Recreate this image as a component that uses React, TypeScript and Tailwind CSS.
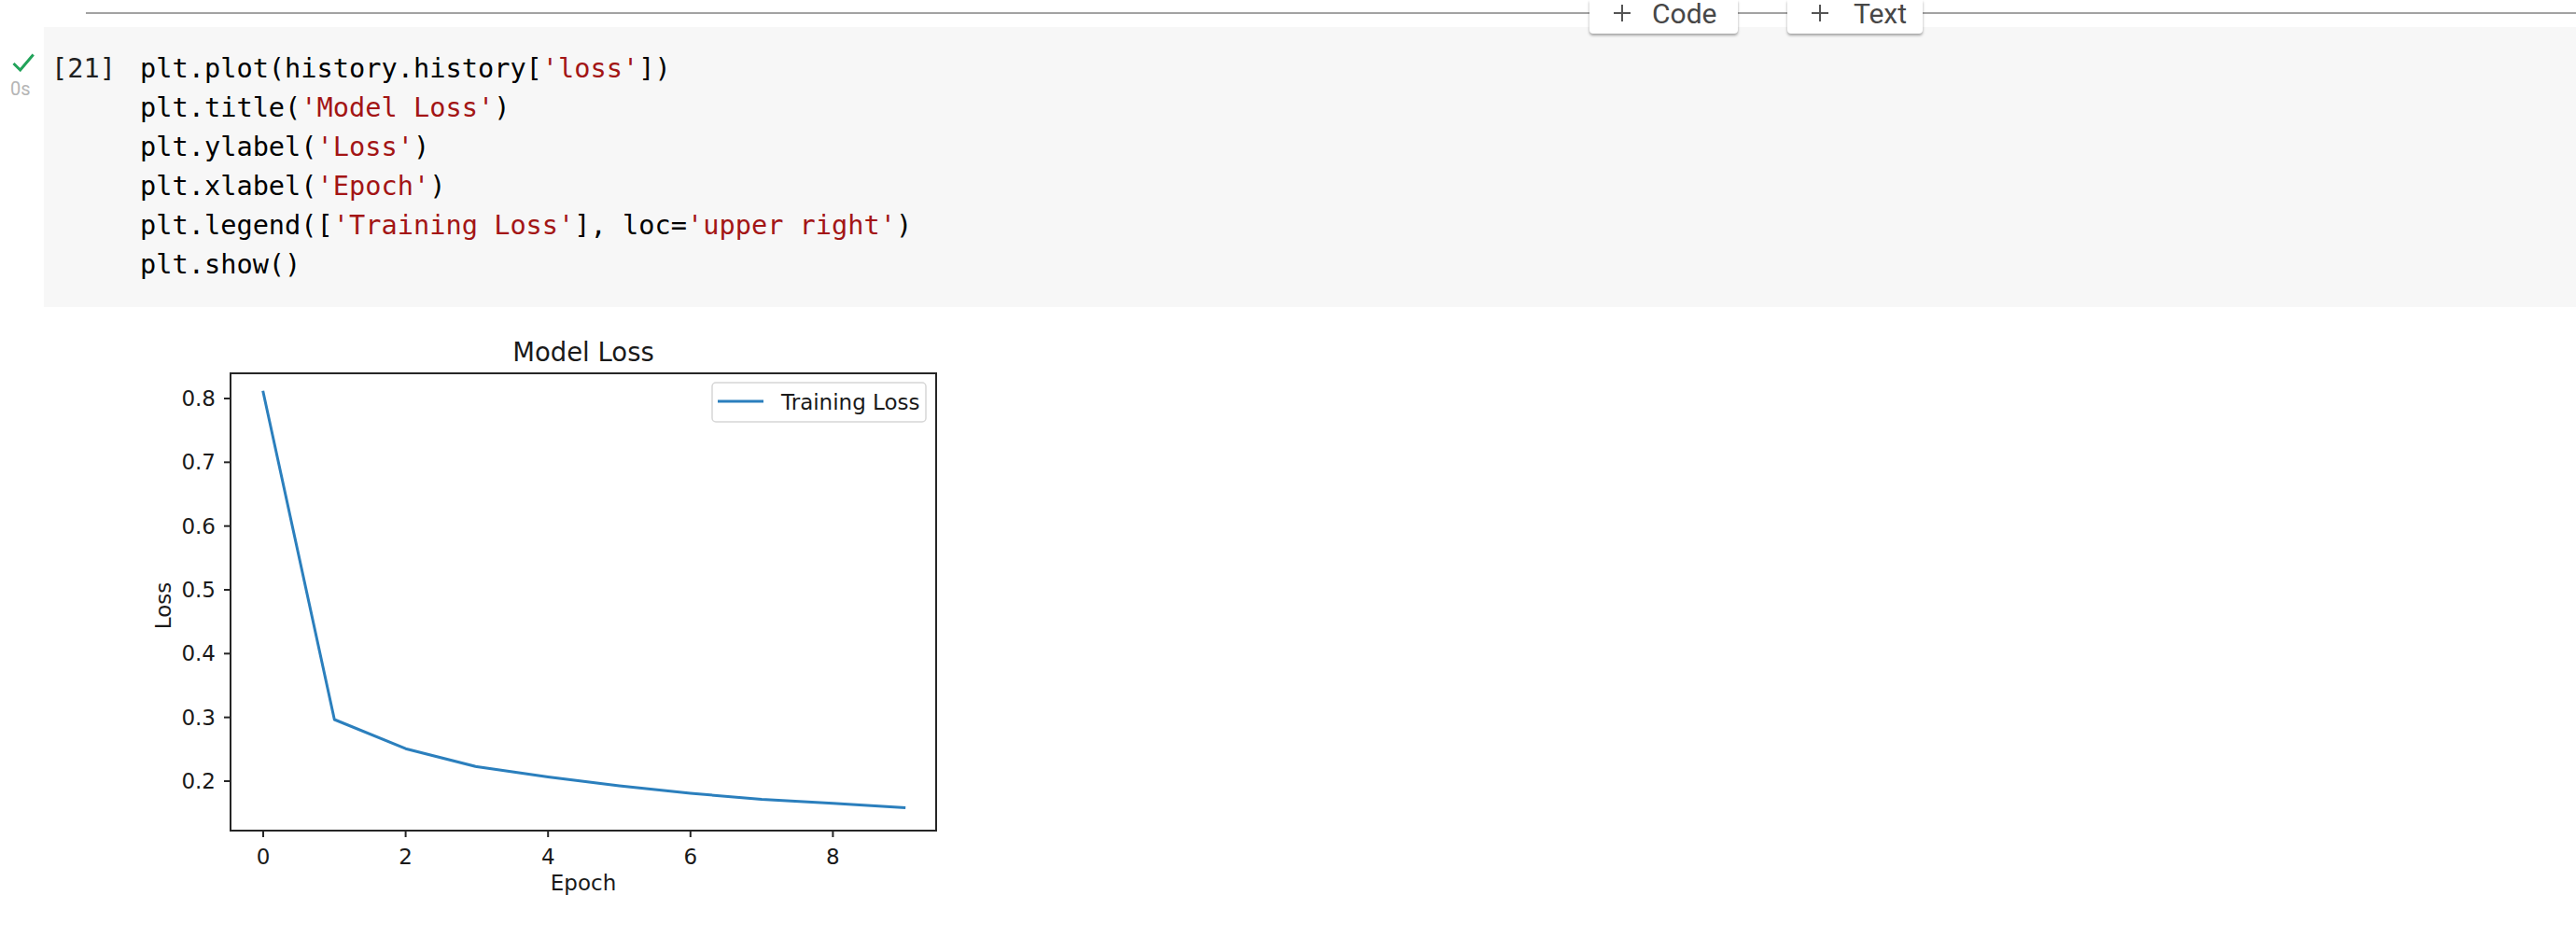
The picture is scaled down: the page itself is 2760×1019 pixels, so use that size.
import React from "react";

const losses = [0.81, 0.2966, 0.251, 0.2225, 0.2065, 0.1925, 0.181, 0.1715, 0.1652, 0.1585];
const xOf = (e: number) => 282 + 76.3 * e;
const yOf = (v: number) => 837 - (v - 0.2) * 683.33;

function Plus() {
  return (
    <svg width="20" height="18" viewBox="0 0 20 18" className="mt-[5px] shrink-0">
      <line x1="1" y1="9" x2="19" y2="9" stroke="#555" strokeWidth="2" />
      <line x1="10" y1="0" x2="10" y2="18" stroke="#555" strokeWidth="2" />
    </svg>
  );
}

function S({ children }: { children: React.ReactNode }) {
  return <span className="text-[#a31515]">{children}</span>;
}

function Chart() {
  const pts = losses.map((v, i) => `${xOf(i).toFixed(1)},${yOf(v).toFixed(1)}`).join(" ");
  const yticks = [0.2, 0.3, 0.4, 0.5, 0.6, 0.7, 0.8];
  const xticks = [0, 2, 4, 6, 8];
  return (
    <svg
      width="900"
      height="650"
      viewBox="140 340 900 650"
      className="font-['DejaVu_Sans',sans-serif]"
      fill="#1a1a1a"
    >
      <text x="625" y="387" fontSize="27.5" textAnchor="middle">Model Loss</text>
      <polyline points={pts} fill="none" stroke="#2b7fbd" strokeWidth="3" strokeLinejoin="round" strokeLinecap="square" />
      <rect x="247" y="400" width="756" height="490" fill="none" stroke="#262626" strokeWidth="2" />
      {yticks.map((v) => (
        <g key={v}>
          <line x1="240" y1={yOf(v)} x2="247" y2={yOf(v)} stroke="#262626" strokeWidth="2" />
          <text x="231" y={yOf(v) + 8} fontSize="23" textAnchor="end">{v.toFixed(1)}</text>
        </g>
      ))}
      {xticks.map((e) => (
        <g key={e}>
          <line x1={xOf(e)} y1="890" x2={xOf(e)} y2="897" stroke="#262626" strokeWidth="2" />
          <text x={xOf(e)} y="926" fontSize="23" textAnchor="middle">{e}</text>
        </g>
      ))}
      <text x="625" y="954" fontSize="23" textAnchor="middle">Epoch</text>
      <text x="183" y="649" fontSize="23" textAnchor="middle" transform="rotate(-90 183 649)">Loss</text>
      <rect x="763" y="410" width="229" height="42" rx="4" fill="#ffffff" fillOpacity="0.8" stroke="#d6d6d6" strokeWidth="1.5" />
      <line x1="769" y1="430" x2="818" y2="430" stroke="#2b7fbd" strokeWidth="3" />
      <text x="837" y="439" fontSize="23">Training Loss</text>
    </svg>
  );
}

export default function App() {
  return (
    <div className="w-[2760px] h-[1019px] bg-white overflow-hidden font-['Roboto',sans-serif]">
      {/* toolbar line with add buttons */}
      <div className="flex items-start h-[29px]">
        <div className="w-[92px] shrink-0" />
        <div className="w-[1611px] shrink-0 mt-[13px] h-[2px] bg-[#a3a3a3]" />
        <div className="relative z-10 w-[159px] h-[36px] shrink-0 bg-white rounded-b-[4px] shadow-[0_2px_3px_rgba(0,0,0,0.35)] flex items-start pl-[25px]">
          <Plus />
          <span className="ml-[22px] text-[30px] leading-[30px] text-[#474747]">Code</span>
        </div>
        <div className="w-[53px] shrink-0 mt-[13px] h-[2px] bg-[#a3a3a3]" />
        <div className="relative z-10 w-[145px] h-[36px] shrink-0 bg-white rounded-b-[4px] shadow-[0_2px_3px_rgba(0,0,0,0.35)] flex items-start pl-[25px]">
          <Plus />
          <span className="ml-[26px] text-[30px] leading-[30px] text-[#474747]">Text</span>
        </div>
        <div className="flex-1 mt-[13px] h-[2px] bg-[#a3a3a3]" />
      </div>

      {/* code cell */}
      <div className="flex">
        <div className="w-[47px] shrink-0 flex flex-col">
          <svg width="24" height="20" viewBox="0 0 24 20" className="ml-[13px] mt-[28px]">
            <polyline points="1.5,11 8.7,18 22.7,1.5" fill="none" stroke="#22a35a" strokeWidth="3" />
          </svg>
          <span className="ml-[11px] mt-[8px] text-[20px] leading-[20px] text-[#b5b5b5]">0s</span>
        </div>
        <div className="flex-1 bg-[#f7f7f7] flex pl-[8px] pt-[23px] pb-[25px] font-['DejaVu_Sans_Mono',monospace] text-[28.64px] leading-[42px] text-black">
          <div className="w-[95px] shrink-0 text-[#212121]">[21]</div>
          <pre className="font-['DejaVu_Sans_Mono',monospace] text-[28.64px] leading-[42px]">
            <div>plt.plot(history.history[<S>'loss'</S>])</div>
            <div>plt.title(<S>'Model Loss'</S>)</div>
            <div>plt.ylabel(<S>'Loss'</S>)</div>
            <div>plt.xlabel(<S>'Epoch'</S>)</div>
            <div>plt.legend([<S>'Training Loss'</S>], loc=<S>'upper right'</S>)</div>
            <div>plt.show()</div>
          </pre>
        </div>
      </div>

      {/* output */}
      <div className="pl-[140px] pt-[11px]">
        <Chart />
      </div>
    </div>
  );
}
